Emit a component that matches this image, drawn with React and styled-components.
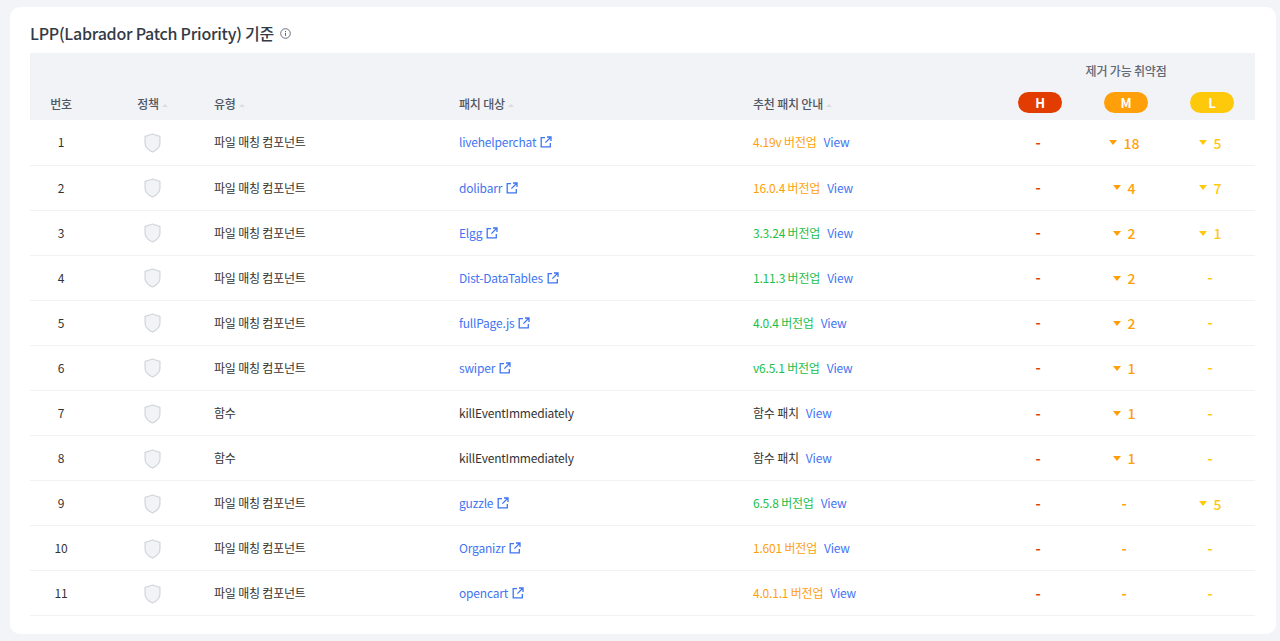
import React from "react";
import styled, { createGlobalStyle } from "styled-components";

const GlobalStyle = createGlobalStyle`
  html, body {
    margin: 0;
    padding: 0;
    background-color: #f3f4f8;
    font-family: "Noto Sans CJK KR", "Noto Sans", sans-serif;
  }
`;

const Page = styled.div`
  width: 1280px;
  height: 641px;
  box-sizing: border-box;
  padding: 7px 4px 7px 10px;
  overflow: hidden;
`;

const Card = styled.section`
  height: 627px;
  box-sizing: border-box;
  padding: 10px 21px 0 20px;
  background-color: #fff;
  border-radius: 10px;
`;

const TitleRow = styled.div`
  display: flex;
  align-items: center;
  gap: 6px;
  height: 32px;
  margin-bottom: 4px;
`;

const Title = styled.h2`
  margin: 0;
  font-size: 16px;
  line-height: 24px;
  font-weight: 500;
  letter-spacing: -0.25px;
  color: #333a45;
`;

const InfoIcon = styled.svg`
  width: 11px;
  height: 11px;
`;

const Table = styled.table`
  width: 1225px;
  table-layout: fixed;
  border-collapse: collapse;
  letter-spacing: -0.2px;
`;

const HeadTop = styled.tr`
  height: 33px;
  background-color: #f1f3f7;
`;

const HeadBottom = styled.tr`
  height: 34px;
  background-color: #f1f3f7;
`;

const Th = styled.th`
  padding: 2px 0 0;
  font-size: 12px;
  line-height: 18px;
  font-weight: 500;
  color: #4f5763;
  text-align: ${(p) => p.$align || "left"};
`;

const PolicyTh = styled(Th)`
  padding-right: 1px;
`;

const PillTh = styled.th`
  padding: 0 0 4px;
  text-align: center;
`;

const GroupTh = styled.th`
  padding: 2px 0 0;
  font-size: 12px;
  line-height: 18px;
  font-weight: 500;
  color: #5f6875;
  text-align: center;
`;

const SortMark = styled.span`
  display: inline-block;
  width: 0;
  height: 0;
  margin-left: 3px;
  vertical-align: 2px;
  border-left: 3px solid transparent;
  border-right: 3px solid transparent;
  border-bottom: 3px solid #d9dce2;
`;

const Pill = styled.span`
  display: block;
  width: 44px;
  height: 21px;
  margin: 3px auto 0;
  border-radius: 11px;
  font-size: 13px;
  line-height: 21px;
  font-weight: 700;
  letter-spacing: 0;
  color: #fff;
  background-color: ${(p) => p.$color};
`;

const Row = styled.tr`
  height: 45.09px;
  border-bottom: 1px solid #f1f2f4;
`;

const Td = styled.td`
  padding: 0;
  font-size: 12px;
  line-height: 18px;
  color: #333;
  text-align: ${(p) => p.$align || "left"};
`;

const ShieldIcon = styled.svg`
  display: block;
  width: 17px;
  height: 20px;
  margin: 1px 0 0 52px;
`;

const TargetLink = styled.a`
  display: inline-flex;
  align-items: center;
  gap: 4px;
  color: #3f75f2;
  text-decoration: none;
`;

const LinkIcon = styled.svg`
  width: 12px;
  height: 12px;
`;

const Version = styled.span`
  color: ${(p) => p.$color};
`;

const ViewLink = styled.a`
  margin-left: 7px;
  color: #3f75f2;
  text-decoration: none;
`;

const Count = styled.span`
  display: inline-flex;
  align-items: center;
  gap: 7px;
  margin-top: -2px;
  padding-right: 4px;
  font-size: 14px;
  font-weight: 500;
  letter-spacing: 0;
  vertical-align: middle;
  color: ${(p) => p.$color};
`;

const DownMark = styled.span`
  width: 0;
  height: 0;
  border-left: 4px solid transparent;
  border-right: 4px solid transparent;
  border-top: 5px solid ${(p) => p.$color};
`;

const Dash = styled.span`
  padding-right: 4px;
  font-size: 14px;
  font-weight: 700;
  color: ${(p) => p.$color};
`;

const ORANGE = "#ff9f0a";
const GREEN = "#1cc04b";
const RED = "#e33c00";
const YELLOW = "#ffc90b";

const COMPONENT = "파일 매칭 컴포넌트";
const FUNC = "함수";

const rows = [
  { type: COMPONENT, target: "livehelperchat", link: true, patch: "4.19v 버전업", color: ORANGE, m: 18, l: 5 },
  { type: COMPONENT, target: "dolibarr", link: true, patch: "16.0.4 버전업", color: ORANGE, m: 4, l: 7 },
  { type: COMPONENT, target: "Elgg", link: true, patch: "3.3.24 버전업", color: GREEN, m: 2, l: 1 },
  { type: COMPONENT, target: "Dist-DataTables", link: true, patch: "1.11.3 버전업", color: GREEN, m: 2 },
  { type: COMPONENT, target: "fullPage.js", link: true, patch: "4.0.4 버전업", color: GREEN, m: 2 },
  { type: COMPONENT, target: "swiper", link: true, patch: "v6.5.1 버전업", color: GREEN, m: 1 },
  { type: FUNC, target: "killEventImmediately", patch: "함수 패치", color: "#333", m: 1 },
  { type: FUNC, target: "killEventImmediately", patch: "함수 패치", color: "#333", m: 1 },
  { type: COMPONENT, target: "guzzle", link: true, patch: "6.5.8 버전업", color: GREEN, l: 5 },
  { type: COMPONENT, target: "Organizr", link: true, patch: "1.601 버전업", color: ORANGE },
  { type: COMPONENT, target: "opencart", link: true, patch: "4.0.1.1 버전업", color: ORANGE },
];

const Severity = ({ value, color }) =>
  value ? (
    <Count $color={color}>
      <DownMark $color={color} />
      {value}
    </Count>
  ) : (
    <Dash $color={color}>-</Dash>
  );

const Sortable = ({ children }) => (
  <Th>
    {children}
    <SortMark />
  </Th>
);

export default function App() {
  return (
    <Page>
      <GlobalStyle />
      <Card>
        <TitleRow>
          <Title>LPP(Labrador Patch Priority) 기준</Title>
          <InfoIcon viewBox="0 0 11 11" fill="none" stroke="#59626e">
            <circle cx="5.5" cy="5.5" r="4.8" strokeWidth="0.9" />
            <path d="M5.5 4.8v3M5.5 3v1" strokeWidth="1" />
          </InfoIcon>
        </TitleRow>
        <Table>
          <colgroup>
            <col width="62" />
            <col width="122" />
            <col width="245" />
            <col width="294" />
            <col width="244" />
            <col width="86" />
            <col width="86" />
            <col width="86" />
          </colgroup>
          <thead>
            <HeadTop>
              <th colSpan={5} />
              <GroupTh colSpan={3}>제거 가능 취약점</GroupTh>
            </HeadTop>
            <HeadBottom>
              <Th $align="center">번호</Th>
              <PolicyTh $align="center">
                정책
                <SortMark />
              </PolicyTh>
              <Sortable>유형</Sortable>
              <Sortable>패치 대상</Sortable>
              <Sortable>추천 패치 안내</Sortable>
              <PillTh><Pill $color={RED}>H</Pill></PillTh>
              <PillTh><Pill $color={ORANGE}>M</Pill></PillTh>
              <PillTh><Pill $color={YELLOW}>L</Pill></PillTh>
            </HeadBottom>
          </thead>
          <tbody>
            {rows.map((row, i) => (
              <Row key={i}>
                <Td $align="center">{i + 1}</Td>
                <Td>
                  <ShieldIcon viewBox="0 0 17 20">
                    <path
                      d="M8.5 1 15.9 3.3v7c0 4-3.1 6.7-7.4 8.7-4.3-2-7.4-4.7-7.4-8.7v-7Z"
                      fill="#f2f3f6"
                      stroke="#d3d6dd"
                      strokeWidth="1.3"
                      strokeLinejoin="round"
                    />
                  </ShieldIcon>
                </Td>
                <Td>{row.type}</Td>
                <Td>
                  {row.link ? (
                    <TargetLink href="#">
                      {row.target}
                      <LinkIcon viewBox="0 0 12 12" fill="none" stroke="#3f75f2" strokeWidth="1.3">
                        <path d="M5 1.7H1.2v9.1h9.1V7" />
                        <path d="M7 1h4v4M11 1 5.4 6.6" />
                      </LinkIcon>
                    </TargetLink>
                  ) : (
                    row.target
                  )}
                </Td>
                <Td>
                  <Version $color={row.color}>{row.patch}</Version>
                  <ViewLink href="#">View</ViewLink>
                </Td>
                <Td $align="center"><Severity color={RED} /></Td>
                <Td $align="center"><Severity value={row.m} color={ORANGE} /></Td>
                <Td $align="center"><Severity value={row.l} color={YELLOW} /></Td>
              </Row>
            ))}
          </tbody>
        </Table>
      </Card>
    </Page>
  );
}
